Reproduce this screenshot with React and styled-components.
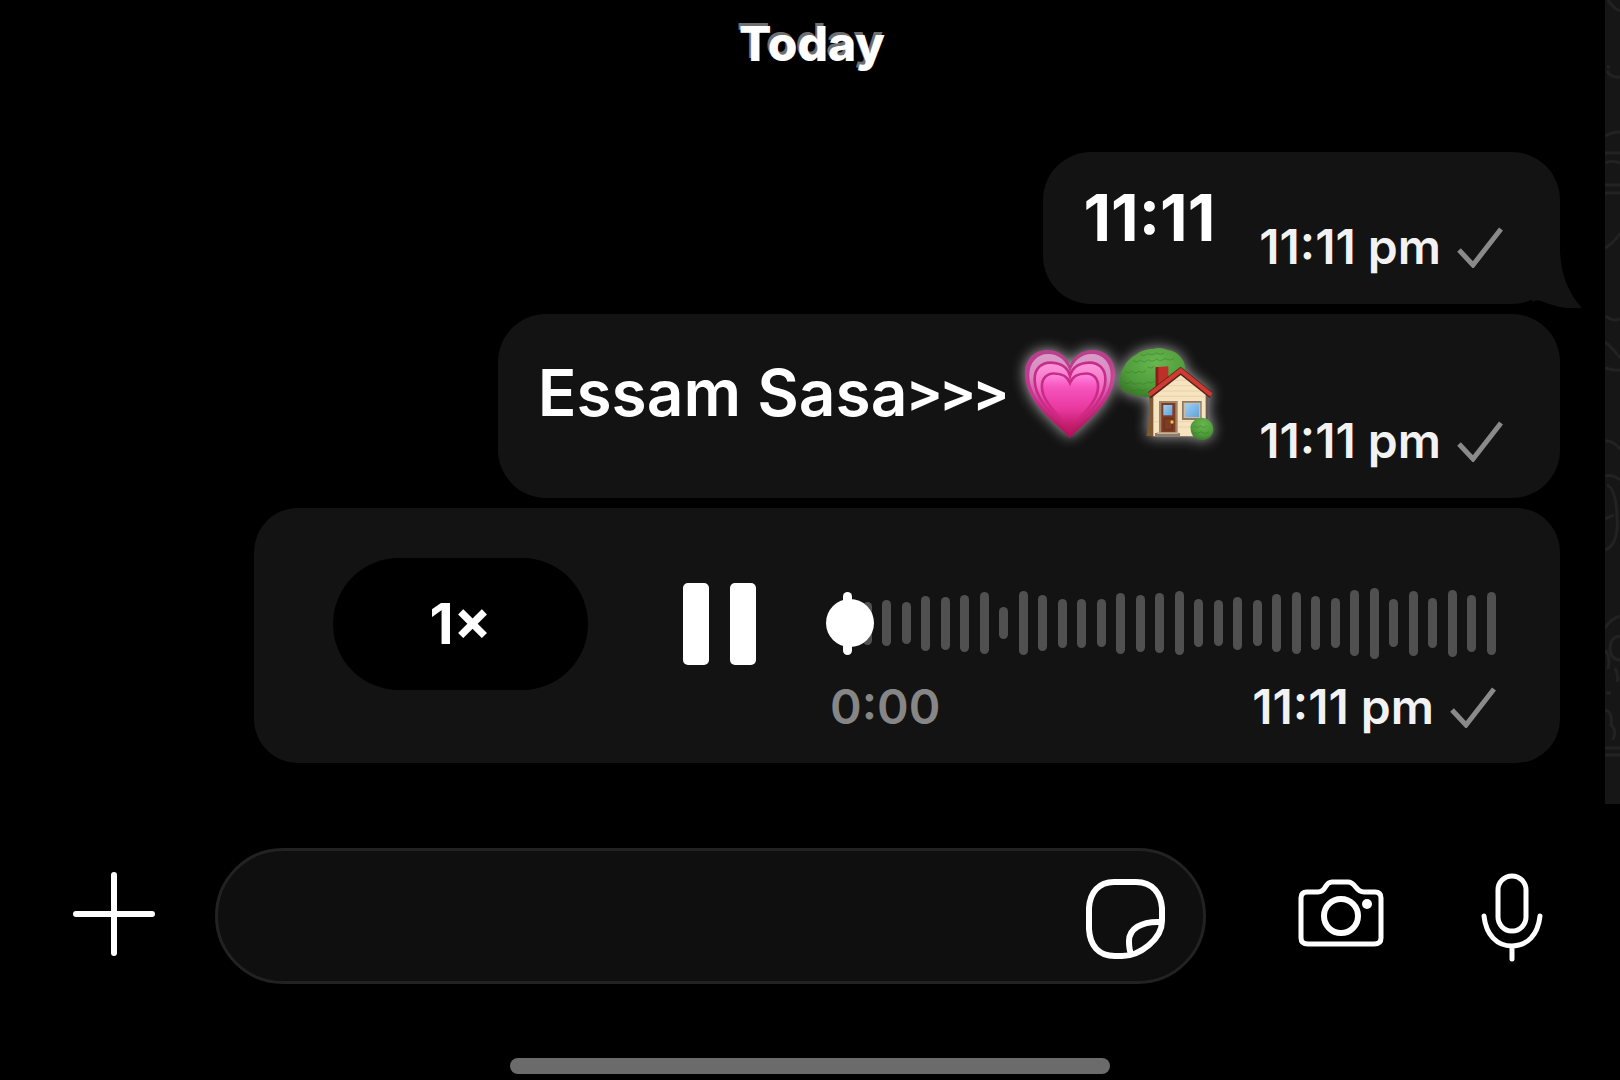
import React, { useState } from 'react';
import styled, { createGlobalStyle } from 'styled-components';

const levels = [
  63, 43, 46, 42, 55, 53, 57, 62, 32, 64, 56, 49, 49, 48, 61, 57, 60,
  64, 48, 46, 53, 46, 58, 62, 54, 50, 66, 71, 48, 65, 50, 67, 57, 63,
];

function Sent({ time }) {
  return (
    <Meta>
      <time>{time}</time>
      <svg width="46" height="42" viewBox="0 0 46 42" fill="none" role="img" aria-label="Sent">
        <path d="M2 24 L16 39 L44 3" stroke="#8a8a8a" strokeWidth="5" />
      </svg>
    </Meta>
  );
}

function GrowingHeart() {
  return (
    <Emoji width="90" height="90" viewBox="72 92 272 270" role="img" aria-label="growing heart">
      <defs>
        <linearGradient id="heartOuter" x1="0" y1="0" x2="0" y2="1">
          <stop offset="0" stopColor="#b8408c" />
          <stop offset="0.5" stopColor="#c8348f" />
          <stop offset="1" stopColor="#b40f55" />
        </linearGradient>
        <linearGradient id="heartPale" x1="0" y1="0" x2="0" y2="1">
          <stop offset="0" stopColor="#d99cc8" />
          <stop offset="0.3" stopColor="#d987c0" />
          <stop offset="0.6" stopColor="#d0389a" />
          <stop offset="1" stopColor="#b81460" />
        </linearGradient>
        <linearGradient id="heartMid" x1="0" y1="0" x2="0" y2="1">
          <stop offset="0" stopColor="#ff97dc" />
          <stop offset="0.35" stopColor="#f070c2" />
          <stop offset="0.65" stopColor="#d93296" />
          <stop offset="1" stopColor="#bb1560" />
        </linearGradient>
        <linearGradient id="heartInner" x1="0" y1="0" x2="0" y2="1">
          <stop offset="0" stopColor="#ff8ade" />
          <stop offset="0.25" stopColor="#f654be" />
          <stop offset="0.65" stopColor="#e8389f" />
          <stop offset="1" stopColor="#c01864" />
        </linearGradient>
        <linearGradient id="heartLine" x1="0" y1="0" x2="0" y2="1">
          <stop offset="0" stopColor="#c62c8b" />
          <stop offset="0.5" stopColor="#cc2a88" />
          <stop offset="0.85" stopColor="#c01864" stopOpacity="0" />
        </linearGradient>
      </defs>
      <path d="M208 361 C188 330 72 262 72 165 C72 120 102 94 139 94 C172 94 198 112 208 140 C218 112 244 94 277 94 C314 94 344 120 344 165 C344 262 228 330 208 361 Z" fill="url(#heartOuter)" />
      <path d="M208 348 C184 318 85 255 85 170 C85 130 110 106 142 106 C174 106 200 128 208 162 C216 128 242 106 274 106 C306 106 331 130 331 170 C331 255 232 318 208 348 Z" fill="url(#heartPale)" />
      <path d="M208 344 C186 312 101 255 101 183 C101 150 122 132 148 132 C178 132 201 146 208 172 C215 146 238 132 268 132 C294 132 315 150 315 183 C315 255 230 312 208 344 Z" fill="url(#heartMid)" stroke="url(#heartLine)" strokeWidth="8" />
      <path d="M208 330 C192 304 123 258 123 204 C123 180 138 165 159 165 C182 165 201 175 208 193 C215 175 234 165 257 165 C278 165 293 180 293 204 C293 258 224 304 208 330 Z" fill="url(#heartInner)" stroke="url(#heartLine)" strokeWidth="8" />
    </Emoji>
  );
}

function HouseWithGarden() {
  return (
    <Emoji width="96" height="94" viewBox="354 88 288 282" role="img" aria-label="house with garden">
      <defs>
        <radialGradient id="leaves" cx="0.55" cy="0.3" r="0.8">
          <stop offset="0" stopColor="#68b650" />
          <stop offset="0.6" stopColor="#4f9c3a" />
          <stop offset="1" stopColor="#336f24" />
        </radialGradient>
        <linearGradient id="glass" x1="0" y1="0" x2="1" y2="1">
          <stop offset="0" stopColor="#9fd0f2" />
          <stop offset="1" stopColor="#5fa3dc" />
        </linearGradient>
      </defs>
      <path d="M444 215 H462 V355 H436 C444 320 446 280 444 215 Z" fill="#7d5a34" />
      <path d="M357 205 C352 190 360 182 358 170 C360 155 370 150 374 138 C384 125 392 118 404 112 C420 98 440 94 456 94 C474 88 490 92 502 98 C520 100 534 110 541 122 C552 134 554 150 550 165 L500 215 C488 226 470 226 460 232 C446 242 430 240 420 236 C406 238 394 230 386 228 C370 226 360 218 357 205 Z" fill="url(#leaves)" />
      <g fill="none" stroke="#2f7324" strokeWidth="3" opacity="0.45">
        <path d="M372 160 Q382 170 392 160 Q402 172 414 160 Q424 170 434 158" />
        <path d="M396 128 Q408 138 418 127 Q430 138 442 126 Q454 136 466 124 Q480 134 492 122 Q506 132 520 122" />
        <path d="M366 192 Q378 204 390 192 Q402 206 414 194 Q428 206 440 192 Q450 200 460 190" />
        <path d="M440 148 Q450 156 460 146 M418 110 Q430 118 440 108 Q454 116 466 106 Q478 114 490 106" />
        <path d="M388 216 Q400 224 412 214 Q424 224 436 214" />
      </g>
      <path d="M464 149 L502 146 V180 L464 214 Z" fill="#bd2f28" />
      <path d="M464 149 L472 148 V208 L464 214 Z" fill="#8a1c1a" />
      <path d="M612 225 H621 V305 H612 Z" fill="#6b5a4c" />
      <path d="M457 225 L538 164 L614 226 V356 H457 Z" fill="#f6e3bf" />
      <g stroke="#e3cb9f" strokeWidth="2">
        <path d="M520 188 H558 M498 204 H580 M476 220 H602 M458 236 H612 M458 312 H478 M530 312 H574 M530 328 H572" />
      </g>
      <path d="M447 240 L539 168 L628 238" fill="none" stroke="#57231d" strokeWidth="7" />
      <path d="M441 225 L537 151 L541 151 L634 225 L628 237 L539 167 L449 236 Z" fill="#cf3a31" />
      <path d="M441 225 L537 150 L541 150 L634 225" fill="none" stroke="#5f2620" strokeWidth="3" />
      <path d="M474 250 H530 V347 H474 Z" fill="#a08368" />
      <path d="M481 256 H523 V344 H481 Z" fill="#7f3c23" />
      <path d="M487 262 H514 V293 H487 Z" fill="url(#glass)" />
      <path d="M489 302 H514 V336 H489 Z" fill="none" stroke="#66301c" strokeWidth="3" />
      <circle cx="513" cy="313" r="5" fill="#f0c24a" />
      <path d="M462 346 H537 V356 H462 Z" fill="#8f7b68" />
      <path d="M468 344 H532 V349 H468 Z" fill="#c5b19a" />
      <path d="M543 250 H602 V307 H543 Z" fill="#8d7963" />
      <path d="M548 255 H598 V301 H548 Z" fill="#cbbba2" />
      <path d="M552 258 H594 V298 H552 Z" fill="url(#glass)" />
      <path d="M569 334 C566 318 580 302 600 300 C620 300 636 314 637 334 C637 354 622 367 603 367 C584 367 570 354 569 334 Z" fill="url(#leaves)" />
      <path d="M580 326 Q590 334 598 324 Q608 334 618 324 M578 344 Q590 352 600 342 Q612 352 624 342" fill="none" stroke="#2f7324" strokeWidth="3" opacity="0.45" />
    </Emoji>
  );
}

function VoiceTrack() {
  const [position, setPosition] = useState(0);
  const played = Math.round((position / 100) * (levels.length - 1));

  return (
    <Wave>
      {levels.map((level, i) => (
        <Bar key={i} $played={i <= played} style={{ height: level }} />
      ))}
      <Seek
        type="range"
        min="0"
        max="100"
        value={position}
        aria-label="Seek voice message"
        onChange={(e) => setPosition(Number(e.target.value))}
      />
    </Wave>
  );
}

export default function App() {
  return (
    <Screen>
      <GlobalStyle />
      <Chat>
        <Conversation>
          <DateLabel>Today</DateLabel>
          <Bubble $top={30}>
            <Body $below={21} $bold>11:11</Body>
            <Sent time="11:11 pm" />
            <Tail width="50" height="60" viewBox="0 0 50 60" aria-hidden="true">
              <path d="M28 0 C28 26 37 46 50 60 C30 61 24 58 14 55 C8 52 5 52 0 54 V0 Z" fill="#131313" />
            </Tail>
          </Bubble>
          <Bubble $top={33}>
            <Body $below={28}>
              <span>
                Essam Sasa<Arrows>&gt;&gt;&gt;</Arrows>
              </span>
              <Emojis>
                <GrowingHeart />
                <HouseWithGarden />
              </Emojis>
            </Body>
            <Sent time="11:11 pm" />
          </Bubble>
          <VoiceBubble>
            <Speed type="button" aria-label="Playback speed 1×">1×</Speed>
            <Pause type="button" aria-label="Pause">
              <svg width="73" height="82" viewBox="0 0 73 82" fill="#fff">
                <rect width="26" height="82" rx="5" />
                <rect x="47" width="26" height="82" rx="5" />
              </svg>
            </Pause>
            <Track>
              <VoiceTrack />
              <TrackFooter>
                <Elapsed>0:00</Elapsed>
                <Sent time="11:11 pm" />
              </TrackFooter>
            </Track>
          </VoiceBubble>
        </Conversation>
        <Wallpaper>
          <svg width="15" height="804" viewBox="0 0 15 804" fill="none" stroke="#222" strokeWidth="3">
            <path d="M3 0 Q8 8 15 11 M2 67 H5 M2 71 Q6 78 15 77 M0 136 Q7 132 15 132 M0 153 H15 M0 163 Q8 160 15 163" />
            <path d="M0 185 H15 M0 193 H15 M0 248 Q9 243 15 233 M0 316 Q8 322 15 319 M0 342 Q8 348 15 358 M0 368 Q8 371 15 370" />
            <path d="M0 441 Q8 440 15 449 M0 476 Q8 474 15 480 M2 485 Q11 489 12 517 Q14 544 0 550 M0 519 L9 515" />
            <path d="M0 628 Q6 619 15 616 M15 636 Q5 637 5 649 Q6 660 15 660 M0 650 Q6 656 3 669 M10 668 Q14 676 12 682 M1 693 H6" />
            <path d="M0 710 Q8 712 6 725 Q12 730 8 740 M0 748 H15 M0 755 H15" />
          </svg>
        </Wallpaper>
      </Chat>
      <Composer>
        <IconButton type="button" aria-label="Add attachment">
          <svg width="82" height="88" viewBox="0 0 82 88" fill="none" stroke="#fff" strokeWidth="6" strokeLinecap="round">
            <path d="M41 3 V81 M3 42 H79" />
          </svg>
        </IconButton>
        <Field>
          <MessageInput type="text" aria-label="Message" />
          <IconButton type="button" aria-label="Stickers">
            <svg width="80" height="86" viewBox="0 -6 80 86" fill="none" stroke="#fff" strokeWidth="6" strokeLinejoin="round">
              <path d="M28 3 H50 C67 3 75 15 76 29 V42 C76 60 54 77 36 77 H29 C12 77 4 66 3 50 V29 C4 13 13 3 28 3 Z" />
              <path d="M75 43 C55 42 43 50 43 62 Q43 70 45 75" />
            </svg>
          </IconButton>
        </Field>
        <IconButton type="button" aria-label="Camera">
          <svg width="86" height="76" viewBox="0 0 86 76" fill="none" stroke="#fff" strokeWidth="5" strokeLinejoin="round">
            <path d="M9 14 H20 C29 14 26 4 34 4 H50 C58 4 57 14 66 14 H77 Q83 14 83 20 V60 Q83 66 76 66 H10 Q3 66 3 60 V20 Q3 14 9 14 Z" />
            <circle cx="43" cy="38" r="17" strokeWidth="6" />
            <circle cx="69" cy="26" r="5" fill="#fff" stroke="none" />
          </svg>
        </IconButton>
        <IconButton type="button" aria-label="Record voice message">
          <svg width="62" height="94" viewBox="0 -4 62 94" fill="none" stroke="#fff" strokeWidth="5" strokeLinecap="round">
            <rect x="17" y="3" width="28" height="55" rx="14" />
            <path d="M3 43 C5 62 16 73 31 73 C46 73 57 62 59 43 M31 73 V86" />
          </svg>
        </IconButton>
      </Composer>
      <HomeIndicator />
    </Screen>
  );
}

const GlobalStyle = createGlobalStyle`
  body {
    margin: 0;
    background: #000;
  }
  * {
    box-sizing: border-box;
  }
`;

const Screen = styled.div`
  min-height: 100vh;
  display: flex;
  flex-direction: column;
  overflow: hidden;
  background: #000;
  color: #fff;
  font-family: Inter, "Liberation Sans", sans-serif;
`;

const Chat = styled.main`
  display: flex;
`;

const Conversation = styled.section`
  flex: 1;
  display: flex;
  flex-direction: column;
  align-items: flex-end;
  gap: 10px;
  padding: 16px 45px 41px 64px;
`;

const Wallpaper = styled.aside`
  width: 15px;
  overflow: hidden;
  background: #161616;

  svg {
    display: block;
  }
`;

const DateLabel = styled.h2`
  align-self: center;
  margin: 0 0 70px;
  font-size: 48px;
  line-height: 56px;
  font-weight: 800;
  text-shadow: -2px -3px 0 #6e6e6e;
`;

const Bubble = styled.article`
  position: relative;
  display: flex;
  align-items: flex-end;
  gap: 44px;
  padding: ${(props) => props.$top}px 57px 29px 40px;
  border-radius: 48px;
  background: #131313;
`;

const Body = styled.div`
  display: flex;
  align-items: center;
  gap: 18px;
  margin-bottom: ${(props) => props.$below}px;
  font-size: 64px;
  line-height: 72px;
  font-weight: ${(props) => (props.$bold ? 700 : 600)};
  white-space: nowrap;
`;

const Arrows = styled.span`
  font-family: Roboto, "Liberation Sans", sans-serif;
  font-weight: 500;
`;

const Emojis = styled.span`
  display: flex;
  align-items: center;
  gap: 4px;
`;

const Emoji = styled.svg`
  display: block;
  overflow: visible;
  filter: drop-shadow(0 0 7px rgba(255, 255, 255, 0.65));
`;

/* Hangs off the lower right corner of the bubble */
const Tail = styled.svg`
  position: absolute;
  right: -22px;
  bottom: -4px;
`;

const Meta = styled.div`
  display: flex;
  align-items: center;
  gap: 16px;
  font-size: 48px;
  line-height: 56px;
  font-weight: 600;
  color: #f2f2f2;
  white-space: nowrap;
`;

const VoiceBubble = styled.article`
  align-self: stretch;
  display: flex;
  align-items: flex-start;
  margin-left: 190px;
  padding: 50px 64px 28px 79px;
  border-radius: 44px;
  background: #131313;
`;

const Speed = styled.button`
  width: 255px;
  height: 132px;
  padding: 0;
  border: none;
  border-radius: 66px;
  background: #000;
  color: #fff;
  font-family: inherit;
  font-size: 56px;
  font-weight: 700;
  cursor: pointer;
`;

const Pause = styled.button`
  display: flex;
  align-items: center;
  height: 132px;
  margin: 0 70px 0 95px;
  padding: 0;
  border: none;
  background: none;
  cursor: pointer;
`;

const Track = styled.div`
  flex: 1;
  padding-top: 17px;
`;

const Wave = styled.div`
  position: relative;
  display: flex;
  align-items: center;
  justify-content: space-between;
  height: 96px;
  padding-left: 17px;
`;

const Bar = styled.span`
  width: 9px;
  border-radius: 5px;
  background: ${(props) => (props.$played ? '#fff' : '#505050')};
`;

/* The slider lies over the bars, only its thumb is visible */
const Seek = styled.input`
  position: absolute;
  inset: 0;
  width: 100%;
  height: 100%;
  margin: 0;
  appearance: none;
  background: none;
  cursor: pointer;

  &::-webkit-slider-thumb {
    appearance: none;
    width: 48px;
    height: 48px;
    border-radius: 50%;
    background: #fff;
  }
`;

const TrackFooter = styled.div`
  display: flex;
  justify-content: space-between;
  margin-top: 8px;
  padding-left: 4px;
`;

const Elapsed = styled.span`
  font-size: 48px;
  line-height: 56px;
  font-weight: 600;
  color: #868686;
`;

const Composer = styled.form`
  display: flex;
  align-items: center;
  padding: 44px 77px 0 73px;
`;

const Field = styled.div`
  flex: 1;
  display: flex;
  align-items: center;
  height: 136px;
  margin: 0 92px 0 60px;
  padding: 0 37px 0 60px;
  border: 3px solid #222;
  border-radius: 68px;
  background: #0f0f0f;
`;

const MessageInput = styled.input`
  flex: 1;
  min-width: 0;
  height: 72px;
  border: none;
  outline: none;
  background: none;
  color: #fff;
  font-family: inherit;
  font-size: 48px;
`;

const IconButton = styled.button`
  display: flex;
  padding: 0;
  border: none;
  background: none;
  cursor: pointer;

  & + & {
    margin-left: 97px;
  }
`;

const HomeIndicator = styled.div`
  align-self: center;
  width: 600px;
  max-width: 60%;
  height: 16px;
  margin: auto 0 6px;
  border-radius: 8px;
  background: #6b6b6b;
`;
